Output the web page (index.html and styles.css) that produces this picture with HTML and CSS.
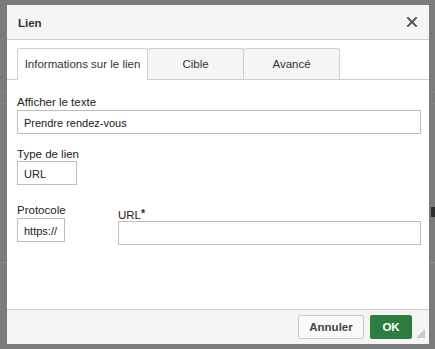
FILE: index.html
```html
<!DOCTYPE html>
<html lang="fr">
<head>
<meta charset="utf-8">
<title>Lien</title>
<link rel="stylesheet" href="styles.css">
</head>
<body>
<div class="backdrop">
  <div class="dialog">
    <div class="header">
      <span class="title">Lien</span>
      <span class="close" aria-label="Fermer">
        <svg width="10" height="10" viewBox="0 0 10 10"><path d="M1 1 L9 9 M9 1 L1 9" stroke="#5a5a5a" stroke-width="2" stroke-linecap="square" fill="none"/></svg>
      </span>
    </div>
    <div class="body">
      <div class="tabs">
        <div class="tab tab-active tab-info">Informations sur le lien</div>
        <div class="tab tab-small">Cible</div>
        <div class="tab tab-small">Avancé</div>
      </div>
      <div class="panel">
        <div class="field">
          <label class="label">Afficher le texte</label>
          <div class="input input-full">Prendre rendez-vous</div>
        </div>
        <div class="field field-type">
          <label class="label">Type de lien</label>
          <div class="input input-type">URL</div>
        </div>
        <div class="row">
          <div class="field">
            <label class="label">Protocole</label>
            <div class="input input-proto">https://</div>
          </div>
          <div class="field field-url">
            <label class="label">URL<span class="req">*</span></label>
            <div class="input input-url"></div>
          </div>
        </div>
      </div>
    </div>
    <div class="footer">
      <button class="btn btn-cancel">Annuler</button>
      <button class="btn btn-ok">OK</button>
    </div>
    <div class="grip"></div>
  </div>
</div>
</body>
</html>
```

FILE: styles.css
```css
html, body {
  margin: 0;
  padding: 0;
}
body {
  width: 435px;
  height: 349px;
  overflow: hidden;
  background-color: #7b7b7b;
  background-image:
    linear-gradient(#8d8d8d, #8d8d8d),
    linear-gradient(#858585, #858585),
    linear-gradient(#858585, #858585),
    linear-gradient(#2e2e2e, #2e2e2e);
  background-size: 435px 1px, 435px 1px, 435px 1px, 4px 10px;
  background-position: 0 262px, 0 91px, 0 103px, 431px 207px;
  background-repeat: no-repeat;
  font-family: "Liberation Sans", Arial, Helvetica, sans-serif;
  font-size: 11.5px;
  color: #222;
}
.backdrop {
  padding: 5px 0 0 7px;
}
.dialog {
  position: relative;
  width: 422px;
  height: 339px;
  background: #fff;
  display: flex;
  flex-direction: column;
}
.header {
  background: #f5f5f5;
  border-bottom: 1px solid #cfcfcf;
  display: flex;
  align-items: center;
  justify-content: space-between;
  padding: 1px 12px 0 11px;
  box-sizing: content-box;
  height: 33px;
}
.title {
  font-weight: bold;
  color: #333;
  font-size: 11.5px;
}
.close {
  display: flex;
  width: 10px;
  height: 10px;
  margin-top: -1px;
}
.body {
  flex: 1;
  padding-top: 8px;
}
.tabs {
  display: flex;
  padding-left: 10px;
  border-bottom: 1px solid #cfcfcf;
  height: 31px;
}
.tab {
  height: 31px;
  box-sizing: border-box;
  border: 1px solid #cfcfcf;
  border-bottom: none;
  border-radius: 3px 3px 0 0;
  background: #f5f5f5;
  display: flex;
  align-items: center;
  justify-content: center;
  color: #333;
  margin-left: -1px;
}
.tab:first-child {
  margin-left: 0;
}
.tab-info {
  width: 131px;
}
.tab-small {
  width: 97px;
}
.tab-active {
  background: #fff;
  height: 32px;
  position: relative;
  z-index: 1;
  padding-bottom: 1px;
}
.panel {
  padding: 15px 8px 0 10px;
}
.field {
  display: flex;
  flex-direction: column;
}
.label {
  line-height: 14px;
  height: 14px;
  margin-bottom: 1px;
  color: #222;
}
.req {
  font-weight: bold;
  font-size: 10.5px;
  vertical-align: 2px;
}
.input {
  height: 24px;
  box-sizing: border-box;
  border: 1px solid #bdbdbd;
  display: flex;
  align-items: center;
  padding: 1px 6px 0 6px;
  color: #222;
  background: #fff;
  font-size: 11px;
}
.input-full {
  width: 404px;
}
.field-type {
  margin-top: 13px;
}
.input-type {
  width: 60px;
  margin-top: -1px;
}
.row {
  display: grid;
  grid-template-columns: 101px 303px;
  margin-top: 18px;
}
.input-proto {
  width: 48px;
  padding-left: 6px;
}
.field-url {
  padding-top: 3px;
}
.input-url {
  width: 303px;
}
.footer {
  height: 35px;
  box-sizing: border-box;
  border-top: 1px solid #cfcfcf;
  background: #f5f5f5;
  display: flex;
  justify-content: flex-end;
  align-items: flex-start;
  padding: 5px 17px 0 0;
  gap: 6px;
}
.btn {
  height: 24px;
  box-sizing: border-box;
  font-family: "Liberation Sans", Arial, Helvetica, sans-serif;
  font-size: 11.5px;
  font-weight: bold;
  border-radius: 2px;
  padding: 0;
  margin: 0;
  cursor: pointer;
}
.btn-cancel {
  width: 66px;
  background: #fafafa;
  border: 1px solid #c7c7c7;
  color: #444;
}
.btn-ok {
  width: 42px;
  background: #2c7d3e;
  border: 1px solid #2c7d3e;
  color: #fff;
}
.grip {
  position: absolute;
  right: 4px;
  bottom: 6px;
  width: 0;
  height: 0;
  border-left: 9px solid transparent;
  border-bottom: 9px solid #c8c8c8;
}
```
